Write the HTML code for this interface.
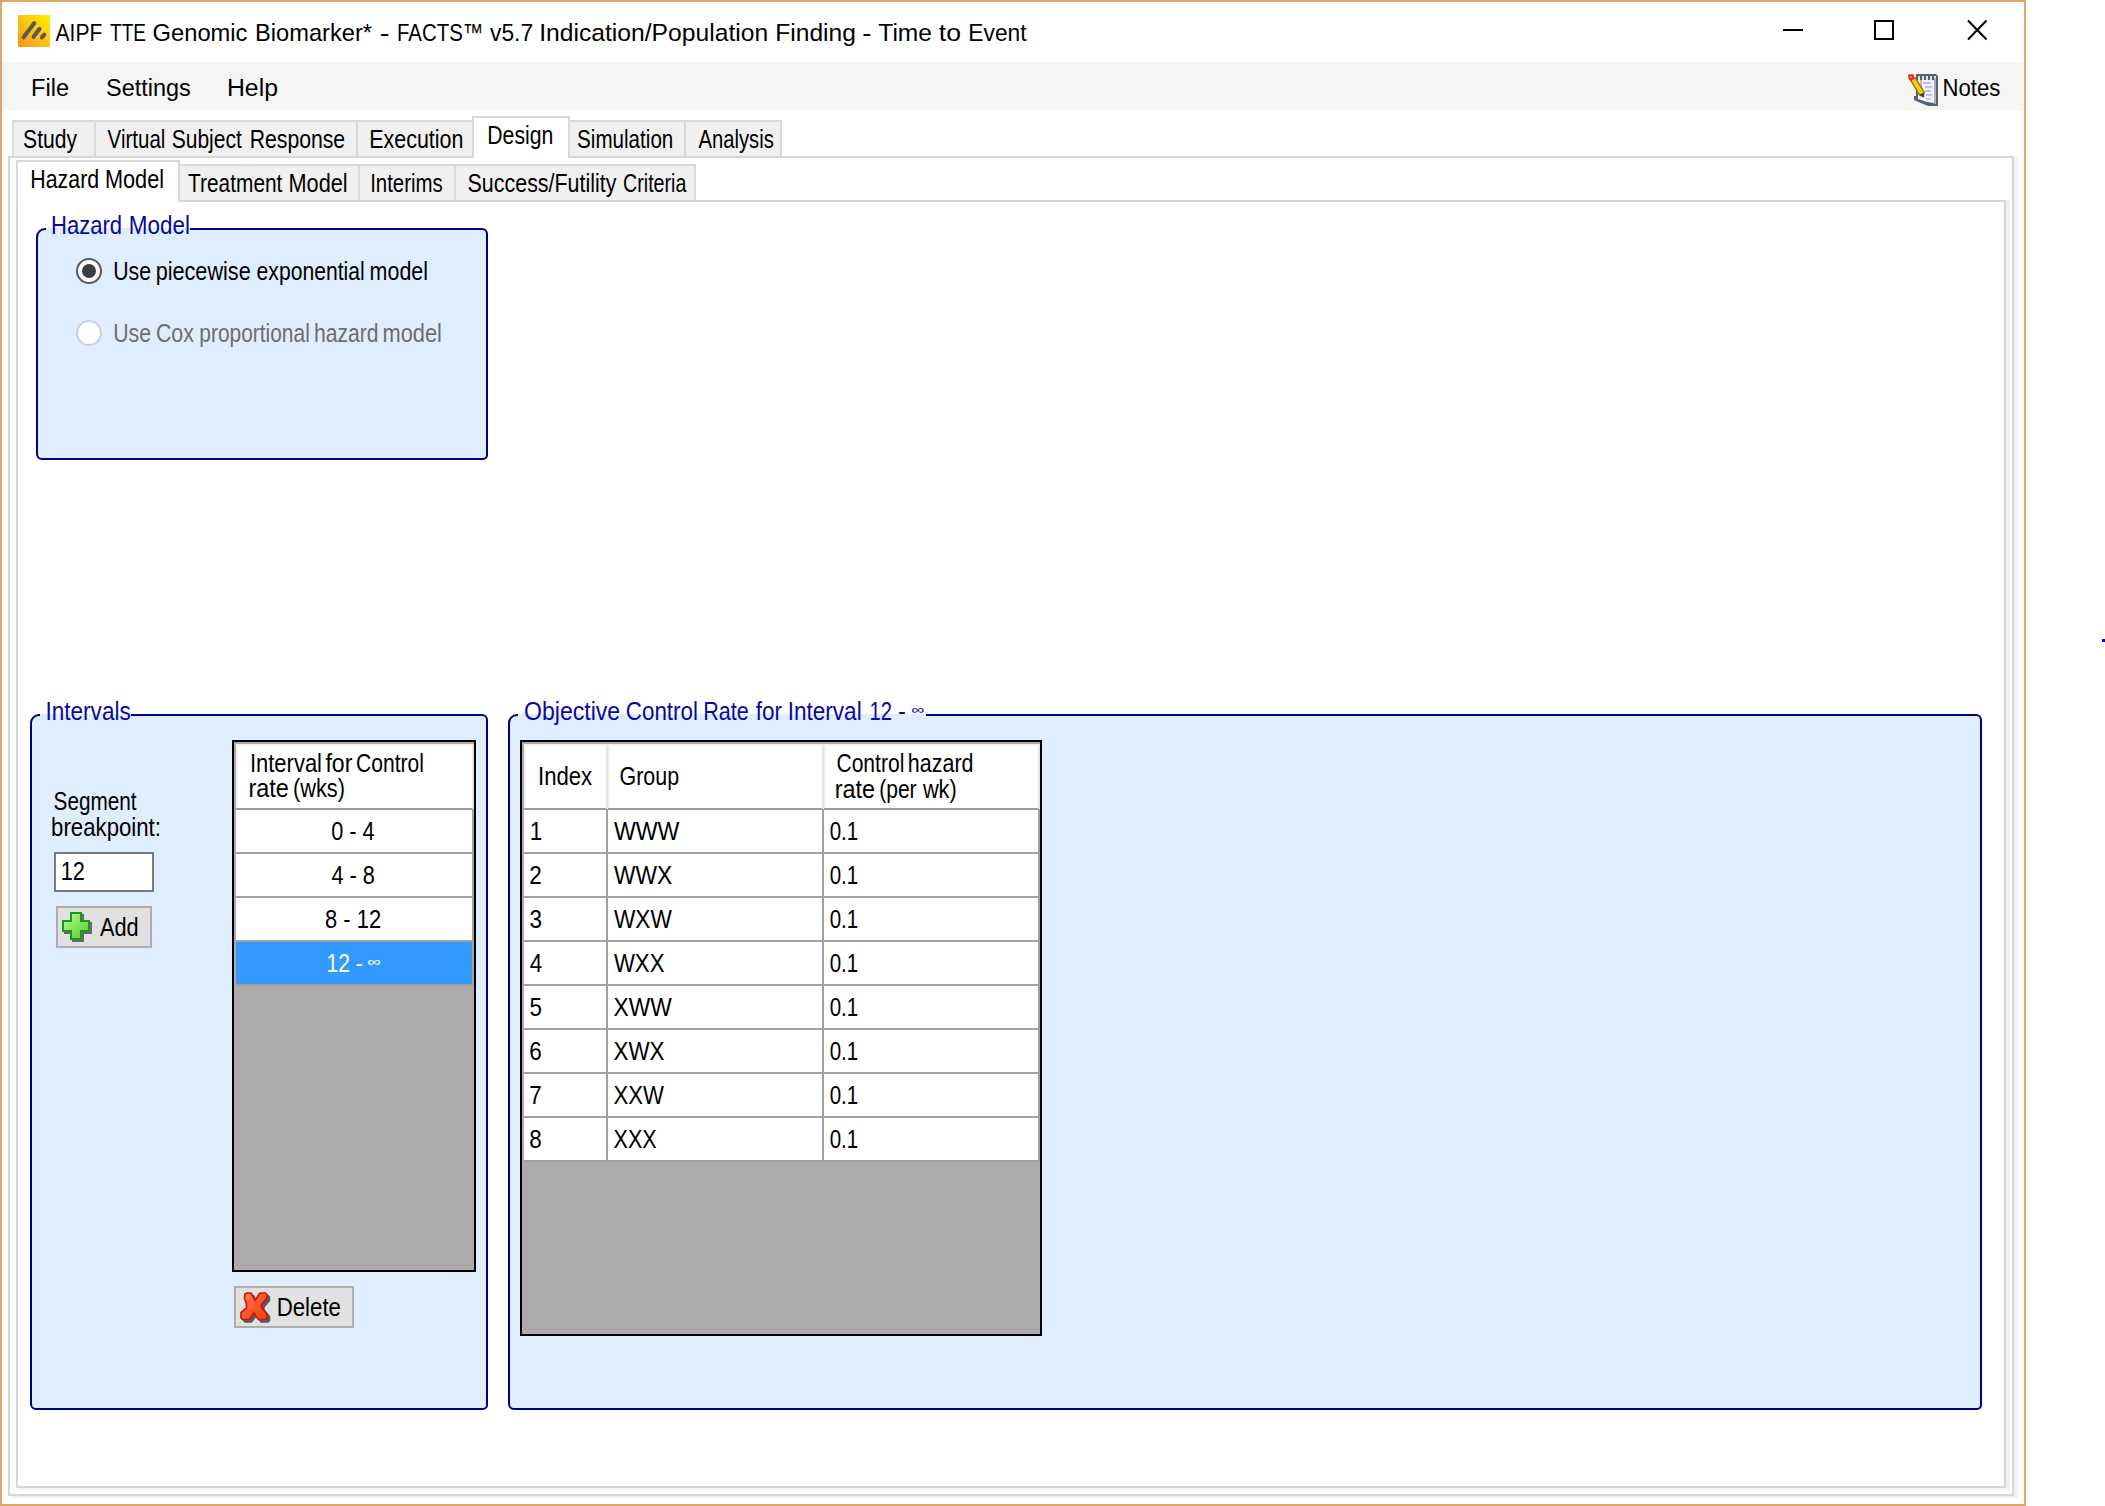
<!DOCTYPE html>
<html lang="en"><head><meta charset="utf-8"><title>AIPF TTE Genomic Biomarker* - FACTS v5.7 Indication/Population Finding - Time to Event</title>
<style>
html,body{margin:0;padding:0;background:#fff;}
body{width:2105px;height:1506px;position:relative;overflow:hidden;font-family:"Liberation Sans","DejaVu Sans",sans-serif;}
.a{position:absolute;box-sizing:border-box;}
#win{left:0;top:0;width:2026px;height:1506px;border:2px solid #DFA861;background:#fff;}
#menubar{left:2px;top:62px;width:2022px;height:48px;background:#F5F5F5;}
.page{border:2px solid #D6D6D6;background:#fff;box-shadow:4px 2px 0 0 #F1F1F1, 4px 0 0 0 #F1F1F1;}
.tab{background:#F0F0F0;border:2px solid #D9D9D9;border-bottom:none;}
.tab.sel{background:#fff;}
.gb{border:2px solid #000080;background:#DFEEFF;border-radius:9px 6px 5px 6px;}
.gbl{background:linear-gradient(#fff 0,#fff 50%,#DFEEFF 50%,#DFEEFF 100%);}
.grid{border:2px solid #000;background:#ABABAB;}
.cell{background:#fff;border-right:2px solid #A0A0A0;border-bottom:2px solid #A0A0A0;}
.cell.selrow{background:#3399FF;}
.hdr{background:#fff;box-shadow:inset 2px 2px 0 0 #F3F3F3;border-right:2px solid #E6E6E6;border-bottom:2px solid #9C9C9C;}
.btn{background:#E1E1E1;border:2px solid #ADADAD;}
svg{position:absolute;left:0;top:0;overflow:visible;}
text{font-family:"Liberation Sans","DejaVu Sans",sans-serif;font-size:25.5px;fill:#000;}
</style></head><body>
<div id="win" class="a " style="left:0px;top:0px;width:2026px;height:1506px;"></div>
<div id="menubar" class="a " style="left:2px;top:62px;width:2022px;height:48px;"></div>
<div class="a page" style="left:8px;top:156px;width:2006px;height:1340px;"></div>
<div class="a tab" style="left:12px;top:120px;width:84px;height:36px;"></div>
<div class="a tab" style="left:94px;top:120px;width:264px;height:36px;"></div>
<div class="a tab" style="left:356px;top:120px;width:118px;height:36px;"></div>
<div class="a tab" style="left:568px;top:120px;width:118px;height:36px;"></div>
<div class="a tab" style="left:684px;top:120px;width:98px;height:36px;"></div>
<div class="a tab sel" style="left:472px;top:116px;width:98px;height:42px;"></div>
<div class="a page" style="left:16px;top:200px;width:1990px;height:1288px;"></div>
<div class="a tab" style="left:178px;top:164px;width:182px;height:36px;"></div>
<div class="a tab" style="left:358px;top:164px;width:98px;height:36px;"></div>
<div class="a tab" style="left:454px;top:164px;width:242px;height:36px;"></div>
<div class="a tab sel" style="left:16px;top:160px;width:164px;height:42px;"></div>
<div class="a gb" style="left:36px;top:228px;width:452px;height:232px;"></div>
<div class="a gbl" style="left:46px;top:218px;width:143.5px;height:20px;"></div>
<div class="a gb" style="left:30px;top:714px;width:458px;height:696px;"></div>
<div class="a gbl" style="left:40px;top:704px;width:91px;height:20px;"></div>
<div class="a gb" style="left:508px;top:714px;width:1474px;height:696px;"></div>
<div class="a gbl" style="left:518px;top:704px;width:407.5px;height:20px;"></div>
<div class="a" style="left:76px;top:258px;width:26px;height:26px;border-radius:50%;border:2px solid #5A5A5A;background:#fff;"></div>
<div class="a" style="left:82px;top:264px;width:14px;height:14px;border-radius:50%;background:#3C3C3C;"></div>
<div class="a" style="left:76px;top:320px;width:26px;height:26px;border-radius:50%;border:2px solid #C9D1DA;background:#fff;"></div>
<div class="a " style="left:54px;top:852px;width:100px;height:40px;background:#fff;border:2px solid #7A7A7A;"></div>
<div class="a btn" style="left:56px;top:906px;width:96px;height:42px;"></div>
<div class="a grid" style="left:232px;top:740px;width:244px;height:532px;"></div>
<div class="a hdr" style="left:236px;top:744px;width:238px;height:66px;"></div>
<div class="a cell" style="left:236px;top:810px;width:238px;height:44px;"></div>
<div class="a cell" style="left:236px;top:854px;width:238px;height:44px;"></div>
<div class="a cell" style="left:236px;top:898px;width:238px;height:44px;"></div>
<div class="a cell selrow" style="left:236px;top:942px;width:238px;height:44px;"></div>
<div class="a btn" style="left:234px;top:1286px;width:120px;height:42px;"></div>
<div class="a grid" style="left:520px;top:740px;width:522px;height:596px;"></div>
<div class="a hdr" style="left:524px;top:744px;width:84px;height:66px;"></div>
<div class="a hdr" style="left:608px;top:744px;width:216px;height:66px;"></div>
<div class="a hdr" style="left:824px;top:744px;width:216px;height:66px;"></div>
<div class="a cell" style="left:524px;top:810px;width:84px;height:44px;"></div>
<div class="a cell" style="left:608px;top:810px;width:216px;height:44px;"></div>
<div class="a cell" style="left:824px;top:810px;width:216px;height:44px;"></div>
<div class="a cell" style="left:524px;top:854px;width:84px;height:44px;"></div>
<div class="a cell" style="left:608px;top:854px;width:216px;height:44px;"></div>
<div class="a cell" style="left:824px;top:854px;width:216px;height:44px;"></div>
<div class="a cell" style="left:524px;top:898px;width:84px;height:44px;"></div>
<div class="a cell" style="left:608px;top:898px;width:216px;height:44px;"></div>
<div class="a cell" style="left:824px;top:898px;width:216px;height:44px;"></div>
<div class="a cell" style="left:524px;top:942px;width:84px;height:44px;"></div>
<div class="a cell" style="left:608px;top:942px;width:216px;height:44px;"></div>
<div class="a cell" style="left:824px;top:942px;width:216px;height:44px;"></div>
<div class="a cell" style="left:524px;top:986px;width:84px;height:44px;"></div>
<div class="a cell" style="left:608px;top:986px;width:216px;height:44px;"></div>
<div class="a cell" style="left:824px;top:986px;width:216px;height:44px;"></div>
<div class="a cell" style="left:524px;top:1030px;width:84px;height:44px;"></div>
<div class="a cell" style="left:608px;top:1030px;width:216px;height:44px;"></div>
<div class="a cell" style="left:824px;top:1030px;width:216px;height:44px;"></div>
<div class="a cell" style="left:524px;top:1074px;width:84px;height:44px;"></div>
<div class="a cell" style="left:608px;top:1074px;width:216px;height:44px;"></div>
<div class="a cell" style="left:824px;top:1074px;width:216px;height:44px;"></div>
<div class="a cell" style="left:524px;top:1118px;width:84px;height:44px;"></div>
<div class="a cell" style="left:608px;top:1118px;width:216px;height:44px;"></div>
<div class="a cell" style="left:824px;top:1118px;width:216px;height:44px;"></div>
<div class="a " style="left:2102px;top:639px;width:3px;height:3px;background:#0000FF;"></div>
<svg width="2105" height="1506" viewBox="0 0 2105 1506">
<defs>
<linearGradient id="gi" x1="0" y1="1" x2="1" y2="0"><stop offset="0" stop-color="#F7921A"/><stop offset="0.5" stop-color="#FBC512"/><stop offset="1" stop-color="#FFF000"/></linearGradient>
<linearGradient id="gp" x1="0" y1="0" x2="1" y2="1"><stop offset="0" stop-color="#B8FF98"/><stop offset="0.5" stop-color="#82E458"/><stop offset="1" stop-color="#66CF38"/></linearGradient>
<linearGradient id="gx" x1="0" y1="0" x2="1" y2="1"><stop offset="0" stop-color="#FF8850"/><stop offset="0.5" stop-color="#FF5A28"/><stop offset="1" stop-color="#F23C0C"/></linearGradient>
</defs>
<!-- title icon -->
<rect x="18" y="15" width="32" height="32" fill="url(#gi)"/>
<g stroke="#5A5A58" stroke-width="4" stroke-linecap="round">
<line x1="23.6" y1="37.3" x2="34.3" y2="23"/><line x1="33.6" y1="36.8" x2="39.6" y2="28.8"/><line x1="41.8" y1="37.4" x2="44.3" y2="34.6"/>
</g>
<!-- window controls -->
<g stroke="#000" stroke-width="2" fill="none">
<line x1="1783" y1="30" x2="1803" y2="30"/>
<rect x="1875" y="21" width="18" height="18"/>
<line x1="1968" y1="20.5" x2="1986.5" y2="39.5"/><line x1="1986.5" y1="20.5" x2="1968" y2="39.5"/>
</g>
<!-- notes icon -->
<g>
<polygon points="1916,74 1936,74 1938,76 1938,106 1928,106 1914,100 1914,96 1916,96" fill="#556270"/>
<polygon points="1918,80 1934,80 1934,103 1927,102 1918,99" fill="#EEF2FA"/>
<rect x="1934" y="78" width="2" height="26" fill="#A7B0BA"/>
<g fill="#DDE3EA"><rect x="1918" y="76" width="2" height="4"/><rect x="1922" y="76" width="2" height="4"/><rect x="1926" y="76" width="2" height="4"/><rect x="1930" y="76" width="2" height="4"/><rect x="1934" y="76" width="2" height="2"/></g>
<rect x="1920" y="80" width="2" height="7" fill="#E9A3A3"/>
<g fill="#B9C5DE"><rect x="1923" y="82" width="8" height="2"/><rect x="1925" y="86" width="7" height="2"/><rect x="1925" y="90" width="6" height="2"/><rect x="1926" y="94" width="6" height="2"/><rect x="1926" y="98" width="5" height="1.5"/></g>
<polygon points="1910.5,80 1915.5,78 1924,92 1923.5,96.5 1919.5,95" fill="#F6CF10" stroke="#8C6A14" stroke-width="1.4" stroke-linejoin="round"/>
<polygon points="1908,74.5 1913.5,74 1914.5,78.5 1909,80.5" fill="#D8362C"/>
<rect x="1910" y="76" width="2" height="2" fill="#FF6A5C"/>
<polygon points="1919.5,94.5 1924,92.5 1923.5,97.5" fill="#4A3B24"/>
</g>
<!-- plus icon -->
<g>
<path d="M72 914 h12 v8 h8 v12 h-8 v8 h-12 v-8 h-8 v-12 h8 z" fill="#4A4A4A" opacity="0.8"/>
<path d="M70 912 h12 v8 h8 v12 h-8 v8 h-12 v-8 h-8 v-12 h8 z" fill="#1C961C"/>
<path d="M72 914 h8 v8 h8 v8 h-8 v8 h-8 v-8 h-8 v-8 h8 z" fill="url(#gp)"/>
</g>
<!-- delete X icon -->
<g>
<path id="xs" d="M245 1294 l2 -1 h4 l4 7.5 l5 -7.5 h5.5 l1.5 1.5 v3.5 l-5.5 6.5 v3 l5.5 6.5 v4 l-1.500 1.500 h-7 l-4.5 -6.500 l-5 6.500 h-6.500 l-1.500 -1.500 v-5.500 l5.500 -4.500 v-4.500 l-2 -5 z" transform="translate(2.5,2.5)" fill="#3A3A3A" opacity="0.8" stroke="#3A3A3A" stroke-width="1.5" stroke-linejoin="round"/>
<path d="M245 1294 l2 -1 h4 l4 7.5 l5 -7.5 h5.5 l1.5 1.5 v3.5 l-5.5 6.5 v3 l5.5 6.500 v4 l-1.500 1.500 h-7 l-4.500 -6.500 l-5 6.500 h-6.500 l-1.500 -1.500 v-5.500 l5.500 -4.500 v-4.500 l-2 -5 z" fill="url(#gx)" stroke="#CC1414" stroke-width="1.7" stroke-linejoin="round"/>
</g>

<text style="font-size:24.6px;"><tspan x="55.50" y="41" textLength="46.84" lengthAdjust="spacingAndGlyphs">AIPF</tspan> <tspan x="110.03" y="41" textLength="35.95" lengthAdjust="spacingAndGlyphs">TTE</tspan> <tspan x="152.59" y="41" textLength="94.90" lengthAdjust="spacingAndGlyphs">Genomic</tspan> <tspan x="255.06" y="41" textLength="117.03" lengthAdjust="spacingAndGlyphs">Biomarker*</tspan> <tspan x="379.73" y="41" textLength="9.88" lengthAdjust="spacingAndGlyphs">-</tspan> <tspan x="397.03" y="41" textLength="86.21" lengthAdjust="spacingAndGlyphs">FACTS™</tspan> <tspan x="490.00" y="41" textLength="43.06" lengthAdjust="spacingAndGlyphs">v5.7</tspan> <tspan x="539.18" y="41" textLength="229.05" lengthAdjust="spacingAndGlyphs">Indication/Population</tspan> <tspan x="775.28" y="41" textLength="80.61" lengthAdjust="spacingAndGlyphs">Finding</tspan> <tspan x="862.31" y="41" textLength="9.20" lengthAdjust="spacingAndGlyphs">-</tspan> <tspan x="878.32" y="41" textLength="53.67" lengthAdjust="spacingAndGlyphs">Time</tspan> <tspan x="938.89" y="41" textLength="22.20" lengthAdjust="spacingAndGlyphs">to</tspan> <tspan x="968.33" y="41" textLength="58.22" lengthAdjust="spacingAndGlyphs">Event</tspan></text>
<text x="31.07" y="96" textLength="37.99" lengthAdjust="spacingAndGlyphs" style="font-size:24.6px;">File</text>
<text x="105.99" y="96" textLength="84.83" lengthAdjust="spacingAndGlyphs" style="font-size:24.6px;">Settings</text>
<text x="226.96" y="96" textLength="51.05" lengthAdjust="spacingAndGlyphs" style="font-size:24.6px;">Help</text>
<text x="1942.48" y="96" textLength="57.87" lengthAdjust="spacingAndGlyphs" style="font-size:24.6px;">Notes</text>
<text x="23.09" y="148" textLength="53.87" lengthAdjust="spacingAndGlyphs">Study</text>
<text><tspan x="107.62" y="148" textLength="57.74" lengthAdjust="spacingAndGlyphs">Virtual</tspan> <tspan x="171.70" y="148" textLength="70.18" lengthAdjust="spacingAndGlyphs">Subject</tspan> <tspan x="249.66" y="148" textLength="95.51" lengthAdjust="spacingAndGlyphs">Response</tspan></text>
<text x="369.24" y="148" textLength="94.12" lengthAdjust="spacingAndGlyphs">Execution</text>
<text x="577.11" y="148" textLength="96.19" lengthAdjust="spacingAndGlyphs">Simulation</text>
<text x="698.50" y="148" textLength="75.23" lengthAdjust="spacingAndGlyphs">Analysis</text>
<text x="487.26" y="144" textLength="66.06" lengthAdjust="spacingAndGlyphs">Design</text>
<text><tspan x="188.09" y="192" textLength="94.30" lengthAdjust="spacingAndGlyphs">Treatment</tspan> <tspan x="288.52" y="192" textLength="59.14" lengthAdjust="spacingAndGlyphs">Model</tspan></text>
<text><tspan x="370.17" y="192" textLength="72.58" lengthAdjust="spacingAndGlyphs">Interims</tspan></text>
<text><tspan x="467.58" y="192" textLength="148.84" lengthAdjust="spacingAndGlyphs">Success/Futility</tspan> <tspan x="623.10" y="192" textLength="63.22" lengthAdjust="spacingAndGlyphs">Criteria</tspan></text>
<text><tspan x="30.25" y="188" textLength="68.91" lengthAdjust="spacingAndGlyphs">Hazard</tspan> <tspan x="104.92" y="188" textLength="59.14" lengthAdjust="spacingAndGlyphs">Model</tspan></text>
<text style="fill:#0808A0;"><tspan x="51.09" y="233.8" textLength="71.01" lengthAdjust="spacingAndGlyphs">Hazard</tspan> <tspan x="128.86" y="233.8" textLength="61.15" lengthAdjust="spacingAndGlyphs">Model</tspan></text>
<text x="45.47" y="719.8" textLength="85.28" lengthAdjust="spacingAndGlyphs" style="fill:#0808A0;">Intervals</text>
<text style="fill:#0808A0;"><tspan x="524.12" y="719.8" textLength="96.08" lengthAdjust="spacingAndGlyphs">Objective</tspan> <tspan x="625.87" y="719.8" textLength="72.04" lengthAdjust="spacingAndGlyphs">Control</tspan> <tspan x="703.23" y="719.8" textLength="45.67" lengthAdjust="spacingAndGlyphs">Rate</tspan> <tspan x="755.74" y="719.8" textLength="26.19" lengthAdjust="spacingAndGlyphs">for</tspan> <tspan x="787.78" y="719.8" textLength="73.88" lengthAdjust="spacingAndGlyphs">Interval</tspan> <tspan x="869.40" y="719.8" textLength="22.51" lengthAdjust="spacingAndGlyphs">12</tspan> <tspan x="897.99" y="719.8" textLength="7.85" lengthAdjust="spacingAndGlyphs">-</tspan> <tspan x="911.59" y="714.3" textLength="12.96" lengthAdjust="spacingAndGlyphs" style="font-size:13px">∞</tspan></text>
<text><tspan x="113.22" y="279.5" textLength="37.81" lengthAdjust="spacingAndGlyphs">Use</tspan> <tspan x="155.65" y="279.5" textLength="95.09" lengthAdjust="spacingAndGlyphs">piecewise</tspan> <tspan x="256.57" y="279.5" textLength="108.19" lengthAdjust="spacingAndGlyphs">exponential</tspan> <tspan x="369.57" y="279.5" textLength="58.47" lengthAdjust="spacingAndGlyphs">model</tspan></text>
<text style="fill:#6D6D6D;"><tspan x="113.22" y="341.5" textLength="37.81" lengthAdjust="spacingAndGlyphs">Use</tspan> <tspan x="155.91" y="341.5" textLength="38.08" lengthAdjust="spacingAndGlyphs">Cox</tspan> <tspan x="199.29" y="341.5" textLength="110.50" lengthAdjust="spacingAndGlyphs">proportional</tspan> <tspan x="314.00" y="341.5" textLength="64.58" lengthAdjust="spacingAndGlyphs">hazard</tspan> <tspan x="382.55" y="341.5" textLength="59.42" lengthAdjust="spacingAndGlyphs">model</tspan></text>
<text x="53.61" y="810" textLength="82.94" lengthAdjust="spacingAndGlyphs">Segment</text>
<text x="51.11" y="836" textLength="109.85" lengthAdjust="spacingAndGlyphs">breakpoint:</text>
<text x="60.69" y="880" textLength="24.20" lengthAdjust="spacingAndGlyphs">12</text>
<text x="100.00" y="936" textLength="38.70" lengthAdjust="spacingAndGlyphs">Add</text>
<text><tspan x="249.92" y="771.7" textLength="72.09" lengthAdjust="spacingAndGlyphs">Interval</tspan> <tspan x="325.43" y="771.7" textLength="26.91" lengthAdjust="spacingAndGlyphs">for</tspan> <tspan x="356.03" y="771.7" textLength="67.89" lengthAdjust="spacingAndGlyphs">Control</tspan></text>
<text><tspan x="248.44" y="797.4" textLength="40.48" lengthAdjust="spacingAndGlyphs">rate</tspan> <tspan x="293.02" y="797.4" textLength="51.98" lengthAdjust="spacingAndGlyphs">(wks)</tspan></text>
<text x="331.15" y="839.8" textLength="43.46" lengthAdjust="spacingAndGlyphs">0 - 4</text>
<text x="331.58" y="883.8" textLength="43.29" lengthAdjust="spacingAndGlyphs">4 - 8</text>
<text x="325.06" y="927.8" textLength="56.02" lengthAdjust="spacingAndGlyphs">8 - 12</text>
<text style="fill:#fff;"><tspan x="326.43" y="971.8" textLength="36.49" lengthAdjust="spacingAndGlyphs">12 -</tspan> <tspan x="367.47" y="966" textLength="13.41" lengthAdjust="spacingAndGlyphs" style="font-size:13px">∞</tspan></text>
<text x="276.68" y="1315.6" textLength="64.28" lengthAdjust="spacingAndGlyphs">Delete</text>
<text x="538.01" y="785.4" textLength="54.18" lengthAdjust="spacingAndGlyphs">Index</text>
<text x="619.50" y="785.4" textLength="59.58" lengthAdjust="spacingAndGlyphs">Group</text>
<text><tspan x="836.43" y="771.7" textLength="67.89" lengthAdjust="spacingAndGlyphs">Control</tspan> <tspan x="907.87" y="771.7" textLength="65.63" lengthAdjust="spacingAndGlyphs">hazard</tspan></text>
<text><tspan x="834.64" y="797.6" textLength="40.37" lengthAdjust="spacingAndGlyphs">rate</tspan> <tspan x="879.16" y="797.6" textLength="37.49" lengthAdjust="spacingAndGlyphs">(per</tspan> <tspan x="922.89" y="797.6" textLength="33.90" lengthAdjust="spacingAndGlyphs">wk)</tspan></text>
<text x="529.63" y="839.8" textLength="12.48" lengthAdjust="spacingAndGlyphs">1</text>
<text x="613.91" y="839.8" textLength="65.57" lengthAdjust="spacingAndGlyphs">WWW</text>
<text x="829.70" y="839.8" textLength="28.56" lengthAdjust="spacingAndGlyphs">0.1</text>
<text x="529.25" y="883.8" textLength="12.48" lengthAdjust="spacingAndGlyphs">2</text>
<text x="613.91" y="883.8" textLength="58.23" lengthAdjust="spacingAndGlyphs">WWX</text>
<text x="829.70" y="883.8" textLength="28.56" lengthAdjust="spacingAndGlyphs">0.1</text>
<text x="529.51" y="927.8" textLength="12.48" lengthAdjust="spacingAndGlyphs">3</text>
<text x="613.91" y="927.8" textLength="57.88" lengthAdjust="spacingAndGlyphs">WXW</text>
<text x="829.70" y="927.8" textLength="28.56" lengthAdjust="spacingAndGlyphs">0.1</text>
<text x="529.86" y="971.8" textLength="12.48" lengthAdjust="spacingAndGlyphs">4</text>
<text x="613.91" y="971.8" textLength="50.53" lengthAdjust="spacingAndGlyphs">WXX</text>
<text x="829.70" y="971.8" textLength="28.56" lengthAdjust="spacingAndGlyphs">0.1</text>
<text x="529.42" y="1015.8" textLength="12.48" lengthAdjust="spacingAndGlyphs">5</text>
<text x="613.55" y="1015.8" textLength="58.23" lengthAdjust="spacingAndGlyphs">XWW</text>
<text x="829.70" y="1015.8" textLength="28.56" lengthAdjust="spacingAndGlyphs">0.1</text>
<text x="529.16" y="1059.8" textLength="12.48" lengthAdjust="spacingAndGlyphs">6</text>
<text x="613.56" y="1059.8" textLength="50.88" lengthAdjust="spacingAndGlyphs">XWX</text>
<text x="829.70" y="1059.8" textLength="28.56" lengthAdjust="spacingAndGlyphs">0.1</text>
<text x="529.16" y="1103.8" textLength="12.48" lengthAdjust="spacingAndGlyphs">7</text>
<text x="613.57" y="1103.8" textLength="50.44" lengthAdjust="spacingAndGlyphs">XXW</text>
<text x="829.70" y="1103.8" textLength="28.56" lengthAdjust="spacingAndGlyphs">0.1</text>
<text x="529.34" y="1147.8" textLength="12.48" lengthAdjust="spacingAndGlyphs">8</text>
<text x="613.58" y="1147.8" textLength="43.08" lengthAdjust="spacingAndGlyphs">XXX</text>
<text x="829.70" y="1147.8" textLength="28.56" lengthAdjust="spacingAndGlyphs">0.1</text>
</svg>
</body></html>
